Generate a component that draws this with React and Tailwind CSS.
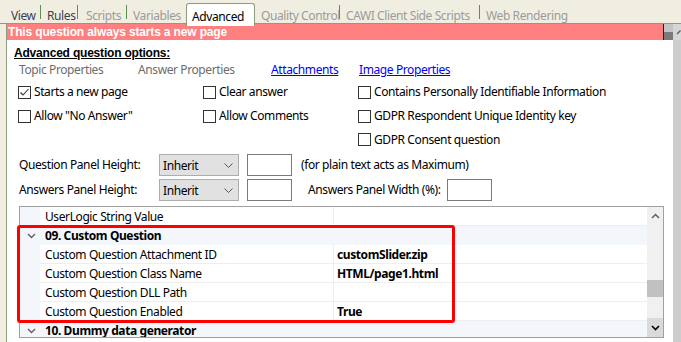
import React from "react";

function Check({ checked }) {
  return (
    <span className="w-[13px] h-[13px] border border-[#333333] bg-white flex-none relative">
      {checked && (
        <svg width="11" height="11" viewBox="0 0 11 11" className="absolute left-0 top-0">
          <polyline points="1.5,5.5 4,8 9.5,2" fill="none" stroke="#333333" strokeWidth="1.1" />
        </svg>
      )}
    </span>
  );
}

function CB({ label, checked }) {
  return (
    <div className="flex items-center gap-[3px] h-full">
      <Check checked={checked} />
      <span className="leading-none whitespace-nowrap">{label}</span>
    </div>
  );
}

function Select() {
  return (
    <div className="w-[80px] h-[22px] bg-[#e1e1e1] border border-[#adadad] flex items-center pl-[3px] pr-[5px] justify-between">
      <span className="pt-[1px]">Inherit</span>
      <svg width="9" height="5" viewBox="0 0 9 5">
        <polyline points="0.5,0.5 4.5,4.5 8.5,0.5" fill="none" stroke="#555555" strokeWidth="1" />
      </svg>
    </div>
  );
}

function Input() {
  return <div className="w-[45px] h-[22px] bg-white border border-[#7a7a7a] flex-none" />;
}

function Chevron() {
  return (
    <svg width="9" height="6" viewBox="0 0 9 6">
      <polyline points="1,1 4.5,4.5 8,1" fill="none" stroke="#606060" strokeWidth="1.4" />
    </svg>
  );
}

function PropRow({ name, value }) {
  return (
    <div className="flex h-[19px] flex-none">
      <div className="w-[20px] bg-[#f3f6fb]" />
      <div className="w-[294px] border-b border-r border-[#eeeeee] pl-[5px] pt-[1px] flex items-center whitespace-nowrap">{name}</div>
      <div className="flex-1 border-b border-[#eeeeee] pl-[3px] pt-[1px] flex items-center font-bold whitespace-nowrap">{value}</div>
    </div>
  );
}

function CatRow({ name }) {
  return (
    <div className="flex h-[19px] flex-none bg-[#f3f6fb] items-center">
      <div className="w-[20px] flex justify-center pl-[2px]">
        <Chevron />
      </div>
      <div className="pl-[5px] pt-[1px] font-bold whitespace-nowrap">{name}</div>
    </div>
  );
}

function Tab({ children, w, ml, dark }) {
  return (
    <div className={`h-[23px] flex items-center flex-none whitespace-nowrap ${w} ${ml} ${dark ? "text-[#3a4252]" : "text-[#9b9b9b]"}`}>
      <span className="pt-[9px]">{children}</span>
    </div>
  );
}

function Sep() {
  return <div className="w-px h-[14px] mt-[5px] bg-[#5f8f4f] flex-none" />;
}

export default function App() {
  return (
    <div className="w-[681px] h-[342px] overflow-hidden bg-[#f0eee1] font-['Noto_Sans',sans-serif] text-[12px] tracking-[-0.4px] text-black relative">
      {/* tab strip */}
      <div className="h-[24px] border-b border-[#8d9c7c] flex items-start">
        <Tab w="w-[29px]" ml="ml-[11px]" dark>View</Tab>
        <Sep />
        <Tab w="w-[30px]" ml="ml-[6px]" dark>Rules</Tab>
        <Sep />
        <Tab w="w-[40px]" ml="ml-[8px]">Scripts</Tab>
        <Sep />
        <Tab w="w-[53px]" ml="ml-[6px]">Variables</Tab>
        <div className="w-[62px] h-[21px] mt-[3px] flex-none bg-white border border-b-0 border-[#8d9c7c] rounded-t-[3px] flex items-center pl-[5px] relative z-10 box-content pb-px">
          <span className="pt-[5px] text-black">Advanced</span>
        </div>
        <Tab w="w-[78px]" ml="ml-[6px]">Quality Control</Tab>
        <Sep />
        <Tab w="w-[133px]" ml="ml-[6px]">CAWI Client Side Scripts</Tab>
        <Sep />
        <Tab w="w-[90px]" ml="ml-[6px]">Web Rendering</Tab>
      </div>

      <div className="flex h-[318px]">
        <div className="w-[6px] flex-none" />
        <div className="w-[667px] flex-none border-l border-[#8d9c7c] bg-white flex flex-col">
          {/* banner */}
          <div className="flex h-[16px] flex-none">
            <div className="w-[656px] bg-[#ff8080] text-white font-bold font-['Liberation_Sans',sans-serif] tracking-[-0.15px] pl-[1px] leading-[17px] whitespace-nowrap">
              This question always starts a new page
            </div>
            <div className="w-[10px] border-l border-[#222222] flex flex-col">
              <div className="h-[8px] bg-[#c4c4c4]" />
              <div className="h-[8px] bg-[#7a7a7a]" />
            </div>
          </div>

          <div className="mt-[5px] h-[16px] leading-[16px] pl-[7px] font-bold underline font-['Liberation_Sans',sans-serif] tracking-[-0.2px] whitespace-nowrap">
            Advanced question options:
          </div>

          <div className="mt-[1px] h-[16px] flex items-center pl-[12px] text-[#6d6d6d] whitespace-nowrap">
            <span className="w-[119px]">Topic Properties</span>
            <span className="w-[133px]">Answer Properties</span>
            <span className="w-[88px] text-[#0000ff] underline">Attachments</span>
            <span className="text-[#0000ff] underline">Image Properties</span>
          </div>

          <div className="mt-[2px] pl-[11px] grid grid-cols-[185px_155px_1fr] grid-rows-[24px_24px_23px]">
            <CB label="Starts a new page" checked />
            <CB label="Clear answer" />
            <CB label="Contains Personally Identifiable Information" />
            <CB label={'Allow "No Answer"'} />
            <CB label="Allow Comments" />
            <CB label="GDPR Respondent Unique Identity key" />
            <div />
            <div />
            <CB label="GDPR Consent question" />
          </div>

          <div className="mt-[3px] h-[22px] flex items-center pl-[12px] whitespace-nowrap">
            <span className="w-[140px] flex-none">Question Panel Height:</span>
            <Select />
            <div className="ml-[8px]"><Input /></div>
            <span className="ml-[9px]">(for plain text acts as Maximum)</span>
          </div>
          <div className="mt-[3px] h-[22px] flex items-center pl-[12px] whitespace-nowrap">
            <span className="w-[140px] flex-none">Answers Panel Height:</span>
            <Select />
            <div className="ml-[8px]"><Input /></div>
            <span className="ml-[16px] w-[139px] flex-none">Answers Panel Width (%):</span>
            <Input />
          </div>

          {/* property grid */}
          <div className="mt-[5px] ml-[12px] w-[645px] h-[132px] flex-none border border-[#a0a0a0] flex overflow-hidden">
            <div className="flex-1 flex flex-col overflow-hidden">
              <PropRow name="UserLogic String Value" value="" />
              <CatRow name="09. Custom Question" />
              <PropRow name="Custom Question Attachment ID" value="customSlider.zip" />
              <PropRow name="Custom Question Class Name" value="HTML/page1.html" />
              <PropRow name="Custom Question DLL Path" value="" />
              <PropRow name="Custom Question Enabled" value="True" />
              <CatRow name="10. Dummy data generator" />
            </div>
            <div className="w-[16px] bg-[#f0f0f0] flex flex-col flex-none">
              <div className="h-[17px] flex items-center justify-center">
                <svg width="9" height="6" viewBox="0 0 9 6">
                  <polyline points="1,5 4.5,1.5 8,5" fill="none" stroke="#606060" strokeWidth="1.5" />
                </svg>
              </div>
              <div className="h-[56px]" />
              <div className="h-[17px] bg-[#c1c1c1]" />
              <div className="h-[21px]" />
              <div className="h-[19px] bg-[#dadada] flex items-center justify-center">
                <svg width="9" height="6" viewBox="0 0 9 6">
                  <polyline points="1,1 4.5,4.5 8,1" fill="none" stroke="#000000" strokeWidth="1.6" />
                </svg>
              </div>
            </div>
          </div>
        </div>
        <div className="w-[8px] flex-none bg-[#cdcdcd] flex flex-col">
          <div className="h-[16px] bg-[#d6d6d6] flex items-center justify-end">
            <svg width="5" height="6" viewBox="0 0 5 6">
              <polyline points="1,5 4.5,1.5" fill="none" stroke="#606060" strokeWidth="1.5" />
            </svg>
          </div>
        </div>
      </div>

      {/* annotation box */}
      <div className="absolute left-[17px] top-[225px] w-[438px] h-[98px] border-[3px] border-[#ff0000] rounded-[3px]" />
    </div>
  );
}
